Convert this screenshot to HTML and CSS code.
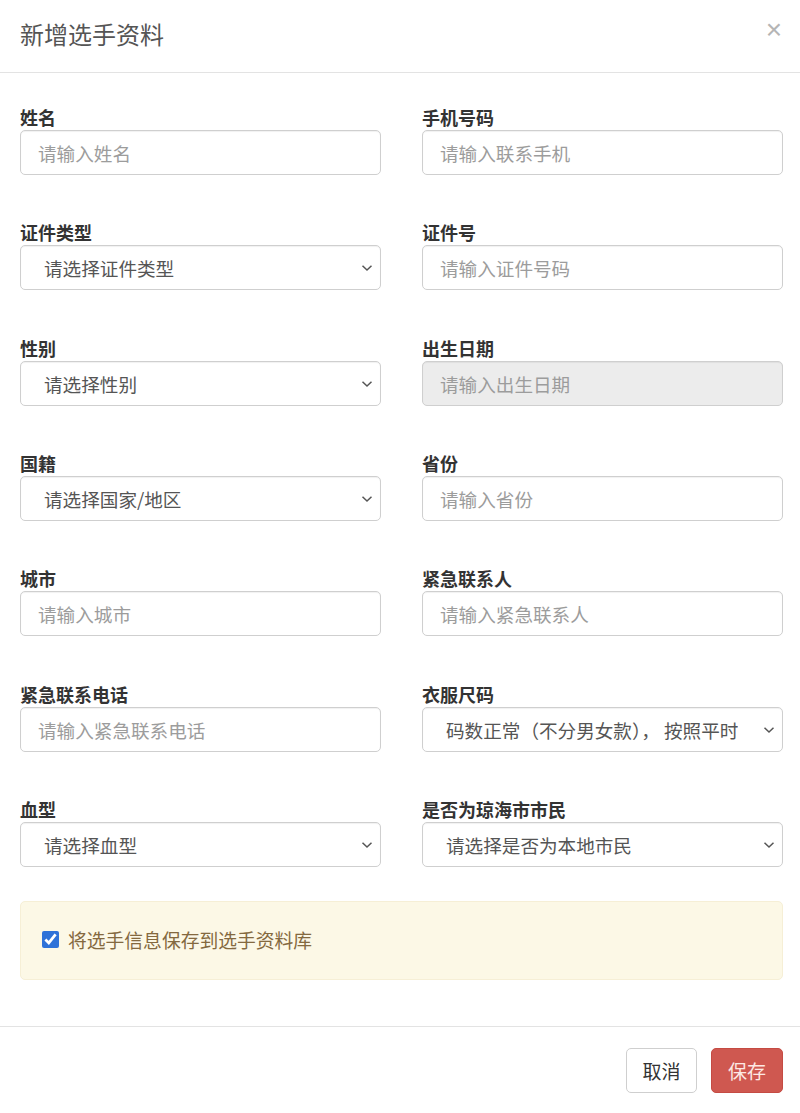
FILE: index.html
```html
<!DOCTYPE html>
<html lang="zh-CN">
<head>
<meta charset="utf-8">
<title>新增选手资料</title>
<link rel="stylesheet" href="styles.css">
</head>
<body>
<div class="modal">
  <div class="modal-header">
    <h4 class="modal-title">新增选手资料</h4>
    <button class="close" type="button">×</button>
  </div>
  <div class="modal-body">
    <div class="form-grid">
      <div class="field">
        <label class="label">姓名</label>
        <input class="control" type="text" placeholder="请输入姓名">
      </div>
      <div class="field">
        <label class="label">手机号码</label>
        <input class="control" type="text" placeholder="请输入联系手机">
      </div>
      <div class="field">
        <label class="label">证件类型</label>
        <div class="select-wrap">
          <select class="control select"><option>请选择证件类型</option></select>
          <svg class="chev" width="12" height="8" viewBox="0 0 12 8"><path d="M1.5 1.8 L6 6 L10.5 1.8" fill="none" stroke="#555" stroke-width="1.5"/></svg>
        </div>
      </div>
      <div class="field">
        <label class="label">证件号</label>
        <input class="control" type="text" placeholder="请输入证件号码">
      </div>
      <div class="field">
        <label class="label">性别</label>
        <div class="select-wrap">
          <select class="control select"><option>请选择性别</option></select>
          <svg class="chev" width="12" height="8" viewBox="0 0 12 8"><path d="M1.5 1.8 L6 6 L10.5 1.8" fill="none" stroke="#555" stroke-width="1.5"/></svg>
        </div>
      </div>
      <div class="field">
        <label class="label">出生日期</label>
        <input class="control" type="text" placeholder="请输入出生日期" disabled>
      </div>
      <div class="field">
        <label class="label">国籍</label>
        <div class="select-wrap">
          <select class="control select"><option>请选择国家/地区</option></select>
          <svg class="chev" width="12" height="8" viewBox="0 0 12 8"><path d="M1.5 1.8 L6 6 L10.5 1.8" fill="none" stroke="#555" stroke-width="1.5"/></svg>
        </div>
      </div>
      <div class="field">
        <label class="label">省份</label>
        <input class="control" type="text" placeholder="请输入省份">
      </div>
      <div class="field">
        <label class="label">城市</label>
        <input class="control" type="text" placeholder="请输入城市">
      </div>
      <div class="field">
        <label class="label">紧急联系人</label>
        <input class="control" type="text" placeholder="请输入紧急联系人">
      </div>
      <div class="field">
        <label class="label">紧急联系电话</label>
        <input class="control" type="text" placeholder="请输入紧急联系电话">
      </div>
      <div class="field">
        <label class="label">衣服尺码</label>
        <div class="select-wrap">
          <select class="control select"><option>码数正常（不分男女款）， 按照平时穿衣尺码选择</option></select>
          <svg class="chev" width="12" height="8" viewBox="0 0 12 8"><path d="M1.5 1.8 L6 6 L10.5 1.8" fill="none" stroke="#555" stroke-width="1.5"/></svg>
        </div>
      </div>
      <div class="field">
        <label class="label">血型</label>
        <div class="select-wrap">
          <select class="control select"><option>请选择血型</option></select>
          <svg class="chev" width="12" height="8" viewBox="0 0 12 8"><path d="M1.5 1.8 L6 6 L10.5 1.8" fill="none" stroke="#555" stroke-width="1.5"/></svg>
        </div>
      </div>
      <div class="field">
        <label class="label">是否为琼海市市民</label>
        <div class="select-wrap">
          <select class="control select"><option>请选择是否为本地市民</option></select>
          <svg class="chev" width="12" height="8" viewBox="0 0 12 8"><path d="M1.5 1.8 L6 6 L10.5 1.8" fill="none" stroke="#555" stroke-width="1.5"/></svg>
        </div>
      </div>
    </div>
    <div class="alert">
      <label class="check">
        <input type="checkbox" checked>
        <span>将选手信息保存到选手资料库</span>
      </label>
    </div>
  </div>
  <div class="modal-footer">
    <button class="btn btn-default" type="button">取消</button>
    <button class="btn btn-danger" type="button">保存</button>
  </div>
</div>
</body>
</html>
```

FILE: styles.css
```css
* {
  box-sizing: border-box;
}

html, body {
  margin: 0;
  padding: 0;
  background: #fff;
}

body {
  font-family: "Noto Sans CJK SC", "Noto Sans", sans-serif;
  color: #333;
  font-size: 18px;
}

.modal {
  width: 800px;
  height: 1113px;
  display: flex;
  flex-direction: column;
}

.modal-header {
  height: 73px;
  border-bottom: 1px solid #e3e3e3;
  display: flex;
  align-items: center;
  justify-content: space-between;
  padding: 0 18px 4px 20px;
}

.modal-title {
  margin: 0;
  font-size: 24px;
  font-weight: 400;
  color: #555;
  line-height: 30px;
}

.close {
  border: 0;
  background: none;
  padding: 0;
  font-size: 28px;
  line-height: 28px;
  color: #b5b5b5;
  font-family: "Liberation Sans", sans-serif;
  font-weight: 400;
  margin-bottom: 8px;
}

.modal-body {
  padding: 32px 17px 0 20px;
}

.form-grid {
  display: grid;
  grid-template-columns: 361px 361px;
  column-gap: 41px;
  row-gap: 45.33px;
}

.field {
  display: flex;
  flex-direction: column;
}

.label {
  font-weight: 700;
  font-size: 18px;
  line-height: 24px;
  color: #333;
  margin-bottom: 1px;
}

.control {
  width: 100%;
  height: 45px;
  border: 1px solid #cfcfcf;
  border-radius: 5px;
  background: #fff;
  font-family: "Noto Sans CJK SC", "Noto Sans", sans-serif;
  font-size: 18.6px;
  color: #555;
  padding: 0 17px;
  outline: none;
  box-shadow: inset 0 1px 1px rgba(0,0,0,0.06);
}

.control::placeholder {
  color: #9c9c9c;
}

.control:disabled {
  background: #ececec;
}

.select-wrap {
  position: relative;
}

.select {
  appearance: none;
  -webkit-appearance: none;
  padding: 0 44px 0 23px;
  color: #555;
  text-overflow: clip;
}

.chev {
  position: absolute;
  right: 8px;
  top: 19px;
  pointer-events: none;
}

.alert {
  margin-top: 34px;
  height: 79px;
  border: 1px solid #f6efd6;
  background: #fcf8e6;
  border-radius: 5px;
  display: flex;
  align-items: center;
  padding: 0 0 2px 21px;
}

.check {
  display: flex;
  align-items: center;
  gap: 9px;
  color: #84693f;
  font-size: 18.8px;
}

.check input {
  margin: 0;
  width: 17px;
  height: 17px;
  accent-color: #2f72d8;
}

.modal-footer {
  margin-top: auto;
  border-top: 1px solid #e3e3e3;
  height: 87px;
  display: flex;
  justify-content: flex-end;
  align-items: flex-start;
  gap: 14px;
  padding: 21px 17px 0 0;
}

.btn {
  height: 45px;
  border-radius: 5px;
  font-family: "Noto Sans CJK SC", "Noto Sans", sans-serif;
  font-size: 19px;
  padding: 0;
  line-height: 43px;
}

.btn-default {
  width: 71px;
  background: #fff;
  border: 1px solid #cfcfcf;
  color: #333;
}

.btn-danger {
  width: 72px;
  background: #cf5850;
  border: 1px solid #c54b43;
  color: #fde8e4;
}
```
